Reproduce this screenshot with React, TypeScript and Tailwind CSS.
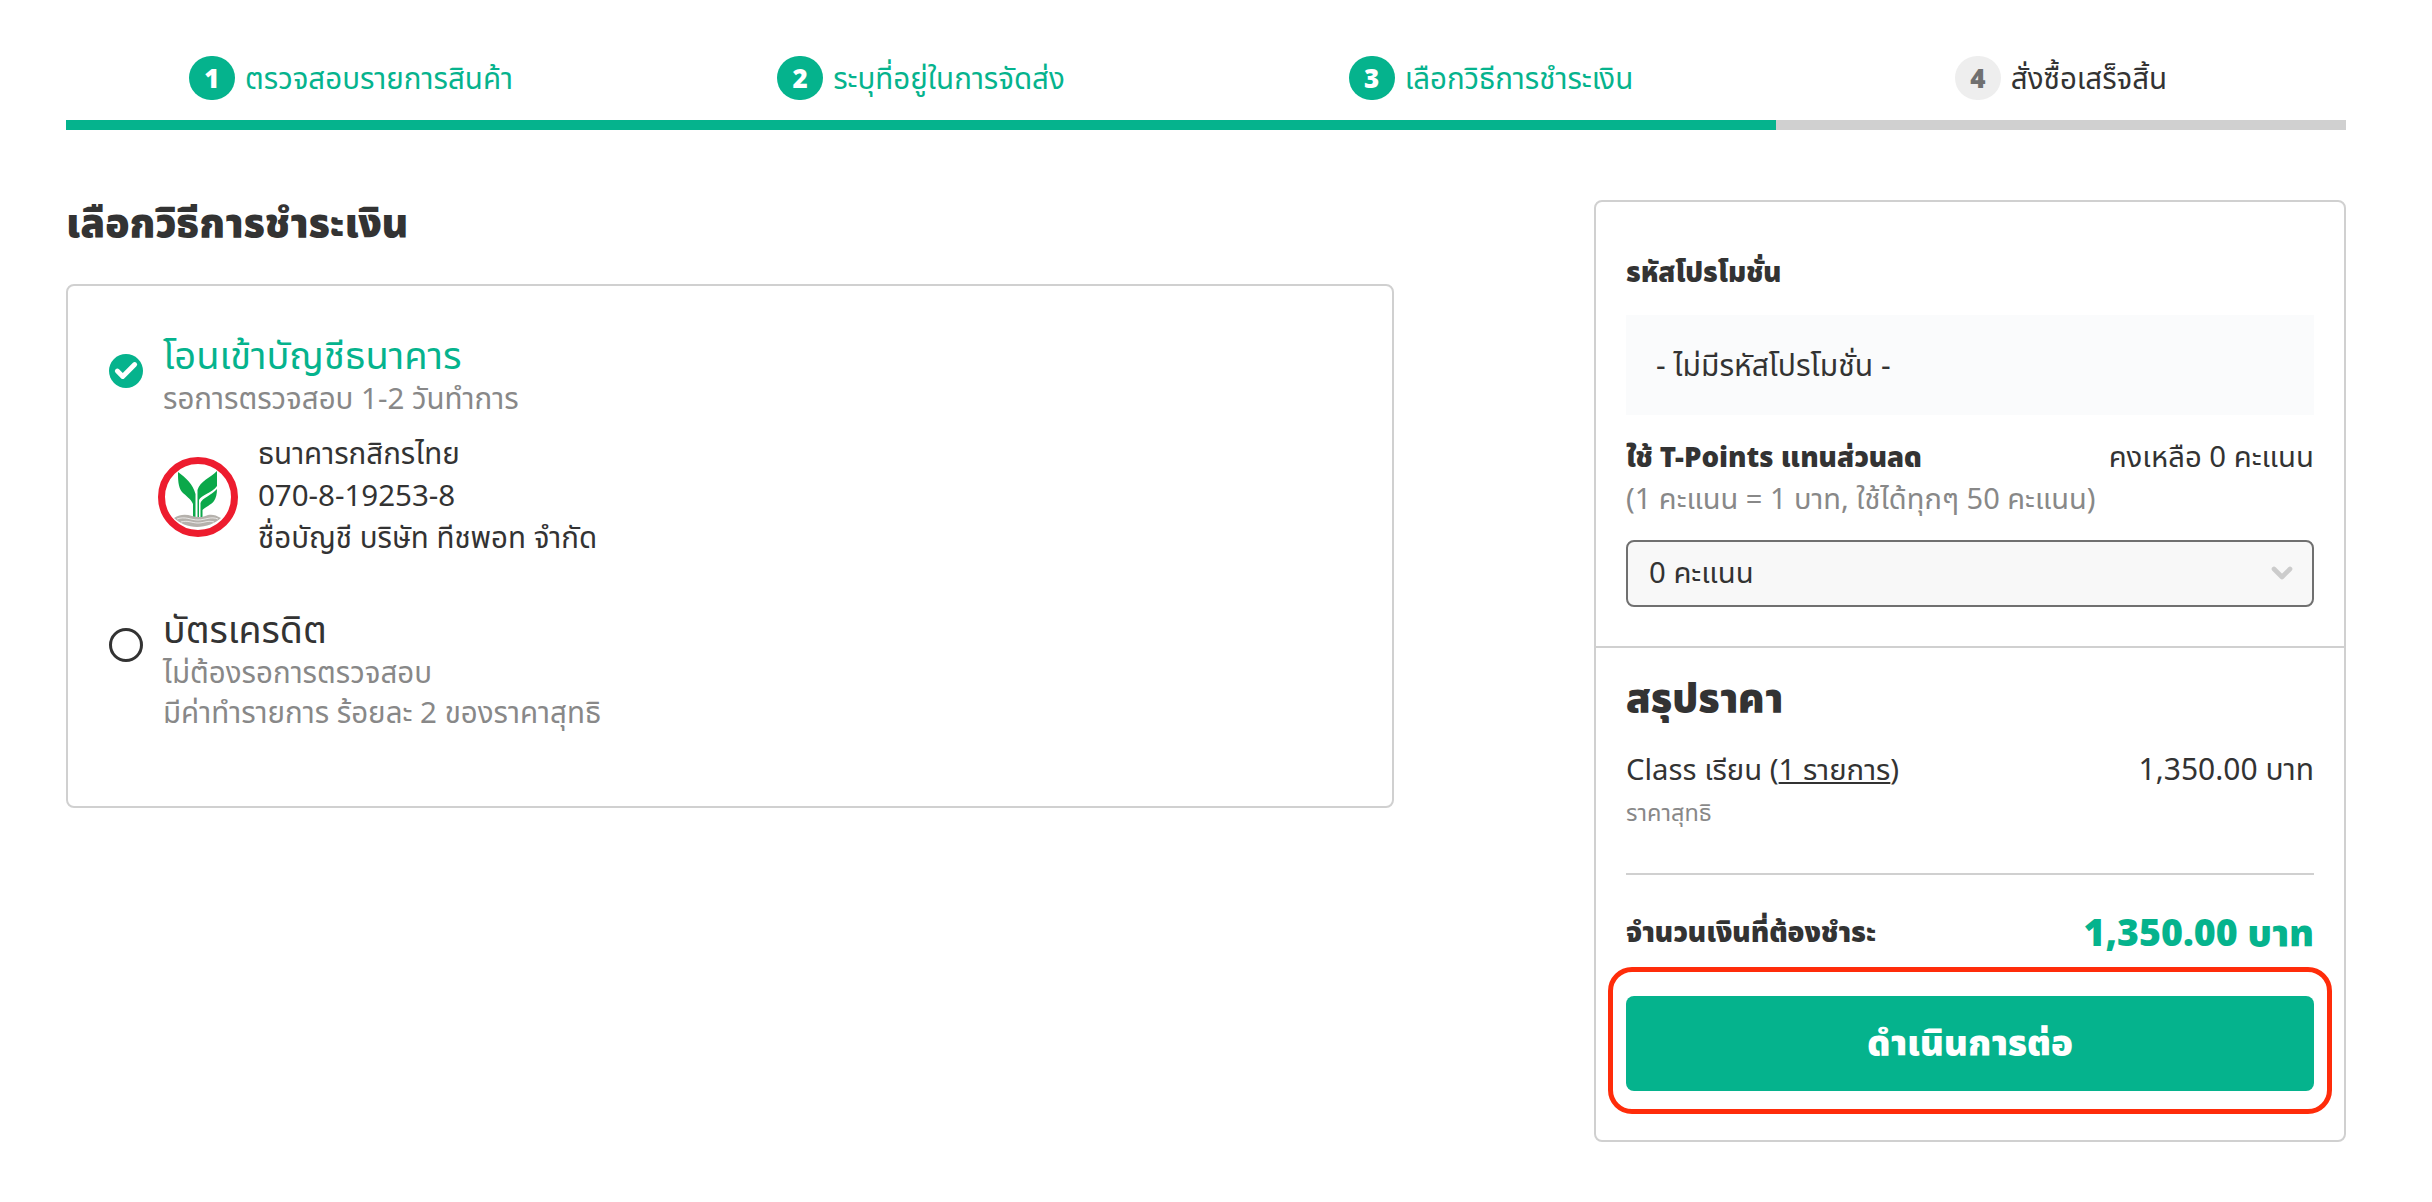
// App.tsx
// Checkout step 3: payment method and price summary
import { Check, ChevronDown } from 'lucide-react'

const steps = [
  { no: 1, label: 'ตรวจสอบรายการสินค้า', done: true },
  { no: 2, label: 'ระบุที่อยู่ในการจัดส่ง', done: true },
  { no: 3, label: 'เลือกวิธีการชำระเงิน', done: true },
  { no: 4, label: 'สั่งซื้อเสร็จสิ้น', done: false },
]

function KbankLogo() {
  return (
    <svg viewBox="0 0 80 80" className="w-[80px] h-[80px] shrink-0">
      <circle cx="40" cy="40" r="36.5" fill="#fff" stroke="#ed1c2e" strokeWidth="7" />
      <path d="M20 15 C28 21 35 27 37.5 37 L37.5 60 L35 60 L35 47 C33 42 28 39 24 35 C20 30 20 22 20 15Z" fill="#0ba84a" />
      <path d="M59 14 C52 21 42 24 39.5 33 L39.5 60 L41 60 L41 43 C43 38 54 36 59 29Z" fill="#0ba84a" />
      <path d="M59 32 C54 38 44 41 42.5 46 L42.5 60 L44.5 60 L44.5 53 C47 50 53 48 56 44 C58 41 59 37 59 32Z" fill="#0ba84a" />
      <path d="M16 61 C22 57 28 57 34 59 C40 61 46 60 50 58 C54 57 58 58 63 61 C58 66 48 70 39 70 C30 70 21 66 16 61Z" fill="#b5b1ac" />
      <path d="M19 62 C27 59 33 63 40 63 C47 63 53 59 60 62 M23 65 C30 63 34 66 40 66 C46 66 50 63 56 65" fill="none" stroke="#fff" strokeWidth="0.7" />
    </svg>
  )
}

export default function App() {
  return (
    <div className="relative min-h-[1202px] bg-white pl-[66px] pr-[86px] text-[#333] font-['Noto_Sans','Noto_Sans_Thai','Liberation_Sans',sans-serif]">
      {/* Stepper */}
      <div className="pt-[56px] grid grid-cols-4">
        {steps.map((s) => (
          <div key={s.no} className="flex flex-col">
            <div className="h-[64px] flex justify-center gap-[10px]">
              <span className={`w-[46px] h-[44px] rounded-full flex items-center justify-center text-[26px] font-black ${s.done ? 'bg-[#05b38d] text-white' : 'bg-[#eeeeee] text-[#707070]'}`}>
                {s.no}
              </span>
              <span className={`h-[44px] flex items-center text-[29.5px] ${s.done ? 'text-[#05b38d]' : 'text-[#333]'}`}>{s.label}</span>
            </div>
            <div className={`h-[10px] ${s.done ? 'bg-[#05b38d]' : 'bg-[#d0d0d0]'}`} />
          </div>
        ))}
      </div>

      <div className="mt-[70px] flex justify-between items-start">
        {/* Payment methods */}
        <div className="w-[1328px]">
          <h1 className="h-[84px] text-[40px] leading-[44px] font-black">เลือกวิธีการชำระเงิน</h1>
          <div className="h-[524px] border-2 border-[#d0d0d0] rounded-lg pl-[41px] pt-[44px]">
            <div className="flex gap-[20px]">
              <span className="mt-[24px] w-[34px] h-[34px] rounded-full bg-[#05b38d] flex items-center justify-center">
                <Check className="w-[26px] h-[26px] text-white" strokeWidth={4.5} />
              </span>
              <div>
                <div className="text-[38px] leading-[48px] text-[#05b38d]">โอนเข้าบัญชีธนาคาร</div>
                <div className="text-[29.5px] leading-[40px] text-[#888]">รอการตรวจสอบ 1-2 วันทำการ</div>
                <div className="mt-[14px] flex items-center gap-[20px] -ml-[5px]">
                  <div className="mt-[3px]"><KbankLogo /></div>
                  <div className="text-[29.5px] leading-[42px] text-[#333]">
                    <div>ธนาคารกสิกรไทย</div>
                    <div>070-8-19253-8</div>
                    <div>ชื่อบัญชี บริษัท ทีชพอท จำกัด</div>
                  </div>
                </div>
              </div>
            </div>
            <div className="mt-[48px] flex gap-[20px]">
              <span className="mt-[22px] w-[34px] h-[34px] rounded-full border-[3px] border-[#333]" />
              <div>
                <div className="text-[37.5px] leading-[46px]">บัตรเครดิต</div>
                <div className="text-[29.5px] leading-[40px] text-[#888]">ไม่ต้องรอการตรวจสอบ</div>
                <div className="text-[29.5px] leading-[40px] text-[#888]">มีค่าทำรายการ ร้อยละ 2 ของราคาสุทธิ</div>
              </div>
            </div>
          </div>
        </div>

        {/* Promo and summary */}
        <div className="w-[752px] h-[942px] border-2 border-[#d0d0d0] rounded-lg">
          <div className="h-[446px] px-[30px] pt-[50px] border-b-2 border-[#d0d0d0]">
            <div className="text-[27.4px] leading-[40px] font-black">รหัสโปรโมชั่น</div>
            <div className="mt-[23px] h-[100px] bg-[#fafbfc] pl-[30px] pb-[2px] flex items-center text-[30px]">- ไม่มีรหัสโปรโมชั่น -</div>
            <div className="mt-[21px] mb-[1px] flex justify-between text-[29.3px] leading-[40px]">
              <span className="font-black text-[27.7px]">ใช้ T-Points แทนส่วนลด</span>
              <span>คงเหลือ 0 คะแนน</span>
            </div>
            <div className="text-[29px] leading-[42px] text-[#888]">(1 คะแนน = 1 บาท, ใช้ได้ทุกๆ 50 คะแนน)</div>
            <div className="mt-[21px] h-[67px] rounded-lg border-2 border-[#707070] bg-[#f8f8f8] pl-[21px] pr-[14px] pb-[2px] flex items-center justify-between text-[29.3px]">
              <span>0 คะแนน</span>
              <ChevronDown className="w-[32px] h-[32px] text-[#ccc]" strokeWidth={3.5} />
            </div>
          </div>
          <div className="px-[30px] pt-[21px]">
            <div className="text-[40px] leading-[56px] font-black">สรุปราคา</div>
            <div className="mt-[24px] flex justify-between text-[29.3px] leading-[40px]">
              <span>Class เรียน (<span className="underline">1 รายการ</span>)</span>
              <span className="text-[30px]">1,350.00 บาท</span>
            </div>
            <div className="mt-[5px] text-[23.5px] leading-[36px] text-[#888]">ราคาสุทธิ</div>
            <div className="mt-[43px] border-t-2 border-[#d0d0d0]" />
            <div className="mt-[32px] h-[50px] flex justify-between items-center">
              <span className="text-[27.8px] font-black">จำนวนเงินที่ต้องชำระ</span>
              <span className="text-[37.5px] font-black text-[#05b38d]">1,350.00 บาท</span>
            </div>
            <div className="mt-[39px] relative h-[95px] rounded-lg bg-[#05b38d] pb-[3px] flex items-center justify-center text-[36px] font-black text-white">
              ดำเนินการต่อ
              <div className="absolute -left-[18px] -right-[18px] -top-[29px] -bottom-[23px] border-[5px] border-[#ff2c0a] rounded-[24px]" />
            </div>
          </div>
        </div>
      </div>
    </div>
  )
}
